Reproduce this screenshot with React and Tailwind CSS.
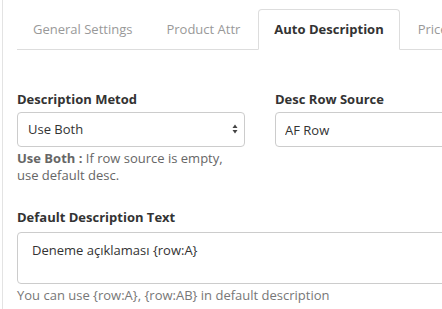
import React from 'react';

const tabs = ['General Settings', 'Product Attr', 'Auto Description', 'Price Settings'];

function App() {
    const active = 'Auto Description';

    return (
        <div className="w-[442px] h-[309px] overflow-hidden bg-white font-['Open_Sans',sans-serif] text-[13px] text-[#333]">
            <div className="ml-[2px] h-full w-[700px] border-l border-[#e3e3e3] pl-[14px] pr-[16px]">
                {/* tabs */}
                <div className="flex pt-[9px] border-b border-[#ddd]">
                    {tabs.map((t) => (
                        <div
                            key={t}
                            className={
                                t === active
                                    ? 'mr-[2px] -mb-px px-[15px] py-[10px] leading-[18px] rounded-t-[4px] border border-[#ddd] border-b-white bg-white font-bold text-[#333]'
                                    : 'mr-[2px] px-[15px] py-[10px] leading-[18px] border border-transparent text-[#999]'
                            }
                        >
                            {t}
                        </div>
                    ))}
                </div>

                {/* form */}
                <div className="grid grid-cols-[228px_228px] gap-x-[30px] pt-[40px]">
                    <div>
                        <label className="block font-bold leading-[18px] mb-[4px]">Description Metod</label>
                        <div className="relative">
                            <select className="w-full h-[35px] pl-[10px] pr-6 border border-[#ccc] rounded-[4px] bg-white text-[13px] text-[#333] appearance-none outline-none">
                                <option>Use Both</option>
                                <option>AF Row</option>
                                <option>Default Desc</option>
                            </select>
                            <svg className="absolute right-[7px] top-[12px] pointer-events-none" width="6" height="10" viewBox="0 0 6 10">
                                <path d="M3 0.5 L5.5 4 L0.5 4 Z" fill="#444" />
                                <path d="M3 9.5 L5.5 6 L0.5 6 Z" fill="#444" />
                            </svg>
                        </div>
                        <p className="mt-[3px] leading-[17px] text-[#666]">
                            <b className="font-bold">Use Both :</b> If row source is empty, use default desc.
                        </p>
                    </div>
                    <div>
                        <label className="block font-bold leading-[18px] mb-[4px]">Desc Row Source</label>
                        <input
                            className="w-full h-[35px] px-[9px] border border-[#ccc] rounded-[4px] text-[13px] text-[#333] outline-none"
                            defaultValue="AF Row"
                        />
                    </div>
                </div>

                <div className="pt-[24px] w-[488px]">
                    <label className="block font-bold leading-[18px] mb-[6px]">Default Description Text</label>
                    <textarea
                        className="block w-full h-[52px] px-[14px] py-[8px] border border-[#ccc] rounded-[4px] text-[13px] leading-[18px] text-[#333] outline-none resize-none"
                        defaultValue="Deneme açıklaması {row:A}"
                    />
                    <p className="mt-[2px] leading-[18px] text-[#777]">You can use {'{row:A}'}, {'{row:AB}'} in default description</p>
                </div>
            </div>
        </div>
    );
}

export default App;
